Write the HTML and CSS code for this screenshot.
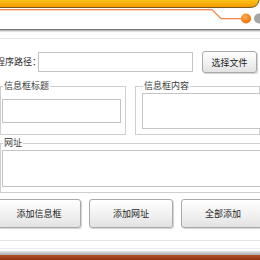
FILE: index.html
```html
<!DOCTYPE html>
<html lang="zh-CN">
<head>
	<meta charset="UTF-8">
	<title>信息框</title>
	<link rel="stylesheet" href="styles.css">
</head>
<body>
	<div class="window">
		<div class="header">
			<svg width="260" height="40" viewBox="0 0 260 40">
				<defs>
					<linearGradient id="band" x1="0" y1="0" x2="0" y2="1">
						<stop offset="0" stop-color="#fcc21a"/>
						<stop offset="1" stop-color="#f29a00"/>
					</linearGradient>
					<radialGradient id="dot" cx="0.4" cy="0.35" r="0.7">
						<stop offset="0" stop-color="#ffb050"/>
						<stop offset="1" stop-color="#ef6a00"/>
					</radialGradient>
				</defs>
				<path d="M0 0 H259 Q258 7.5 250 7.5 H0 Z" fill="url(#band)"/>
				<path d="M0 7.5 H250 Q258 7.5 259 0" fill="none" stroke="#7d5a1c" stroke-width="1"/>
				<polyline points="0,10.5 212,10.5 221,19.5 246,19.5" fill="none" stroke="#fbd9c0" stroke-width="1"/>
				<polyline points="0,9.5 212,9.5 221,18.5 246,18.5" fill="none" stroke="#f08a4a" stroke-width="1.2"/>
				<circle cx="246" cy="18.5" r="5" fill="url(#dot)"/>
				<circle cx="259" cy="18.5" r="5" fill="#a6a6a6"/>
				<rect x="0" y="29" width="260" height="1" fill="#7c7c7c"/>
				<rect x="0" y="30" width="260" height="1" fill="#b4b4b4"/>
				<rect x="0" y="31" width="260" height="1" fill="#e2e2e2"/>
				<rect x="0" y="38" width="260" height="1" fill="#e6e6e6"/>
			</svg>
		</div>

		<div class="content">
			<div class="path-row">
				<div class="path-label"><span>程序路径：</span></div>
				<input class="path-input" type="text">
				<button class="btn btn-pick">选择文件</button>
			</div>

			<div class="group-row">
				<fieldset class="group group-title">
					<legend>信息框标题</legend>
					<input class="field field-title" type="text">
				</fieldset>
				<fieldset class="group group-body">
					<legend>信息框内容</legend>
					<textarea class="field field-body"></textarea>
				</fieldset>
			</div>

			<fieldset class="group group-url">
				<legend>网址</legend>
				<textarea class="field field-url"></textarea>
			</fieldset>

			<div class="btn-row">
				<button class="btn btn-big">添加信息框</button>
				<button class="btn btn-big">添加网址</button>
				<button class="btn btn-big">全部添加</button>
			</div>
		</div>

		<div class="footer">
			<div class="footer-line"></div>
			<div class="footer-line footer-line2"></div>
			<div class="footer-shade"></div>
			<div class="footer-bar"></div>
		</div>
	</div>
</body>
</html>
```

FILE: styles.css
```css
*{margin:0;padding:0;box-sizing:border-box;}
html,body{width:260px;height:260px;overflow:hidden;background:#fff;}
body{
	font-family:"Noto Sans CJK SC","Liberation Sans",sans-serif;
	font-size:9px;
	color:#2a2a2a;
}
.window{
	width:260px;
	height:260px;
	display:flex;
	flex-direction:column;
}
.header{height:40px;}
.header svg{display:block;}

.content{
	display:flex;
	flex-direction:column;
}

/* path row */
.path-row{
	display:flex;
	align-items:center;
	height:22px;
	margin-top:11px;
}
.path-label{
	width:38px;
	display:flex;
	justify-content:flex-end;
	white-space:nowrap;
	flex-shrink:0;
}
.path-label span{
	line-height:12px;
	margin-right:-3px;
}
.path-input{
	width:155px;
	height:20px;
	border:1px solid #c4c4c4;
	outline:none;
}

.btn{
	font-family:inherit;
	font-size:9px;
	color:#222;
	border:1px solid #a9a9a9;
	border-radius:3px;
	background:linear-gradient(#fefefe,#f1f1f1 55%,#e2e2e2);
	box-shadow:1px 1px 1px rgba(0,0,0,0.18);
	flex-shrink:0;
}
.btn-pick{
	width:55px;
	height:22px;
	margin-left:9px;
}

/* groups */
fieldset.group{
	border:1px solid #cfcfcf;
	min-width:0;
}
fieldset.group legend{
	line-height:12px;
	height:12px;
	margin-left:1px;
	padding:0 1px;
	color:#3a3a3a;
}
.field{
	display:block;
	border:1px solid #c4c4c4;
	outline:none;
	resize:none;
	background:#fff;
}

.group-row{
	display:flex;
	margin-top:7px;
}
.group-title{
	width:127px;
	padding:7px 5px 11px 1px;
}
.field-title{
	width:119px;
	height:24px;
}
.group-body{
	width:126px;
	margin-left:9px;
	padding:1px 0 5px 6px;
}
.field-body{
	width:120px;
	height:36px;
}

.group-url{
	width:262px;
	margin-top:2px;
	padding:1px 0 5px 1px;
}
.field-url{
	width:259px;
	height:37px;
}

/* buttons */
.btn-row{
	display:flex;
	gap:8px;
	margin-top:6px;
	margin-left:-3px;
}
.btn-big{
	width:84px;
	height:29px;
}

/* bottom */
.footer{
	margin-top:auto;
	display:flex;
	flex-direction:column;
}
.footer-line{
	height:1px;
	background:#e3e3e3;
	margin-bottom:7px;
}
.footer-line2{
	background:#ececec;
	margin-bottom:2px;
}
.footer-shade{
	height:4px;
	background:linear-gradient(#e6e6e6,#a9a9a9);
}
.footer-bar{
	height:5px;
	background:linear-gradient(#b2512a,#8e3210);
}
```
